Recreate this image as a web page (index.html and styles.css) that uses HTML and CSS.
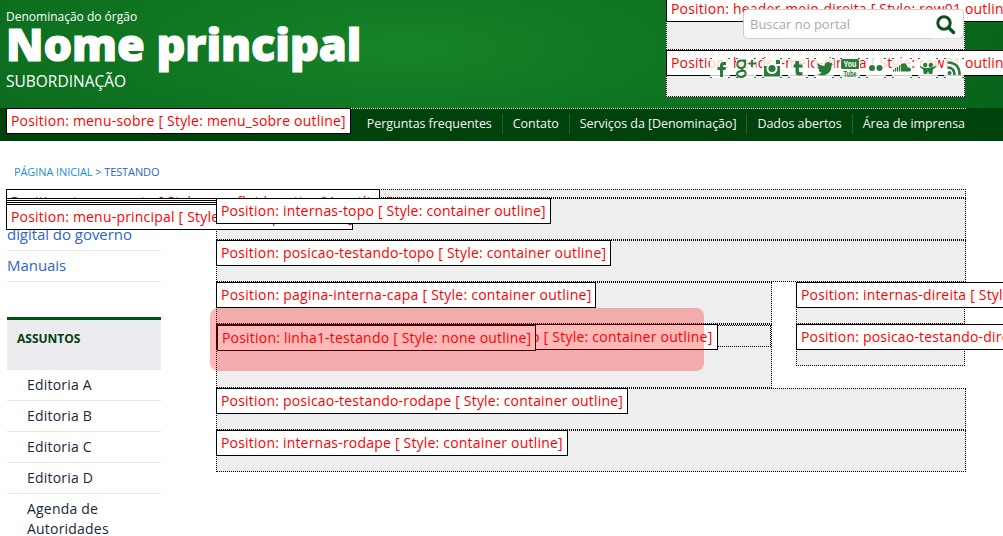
FILE: index.html
```html
<!DOCTYPE html>
<html lang="pt-br">
<head>
<meta charset="utf-8">
<title>Testando</title>
<link rel="stylesheet" href="styles.css">
</head>
<body>
<header class="header">
  <div class="brand">
    <span class="org">Denominação do órgão</span>
    <span class="name">Nome principal</span>
    <span class="sub">SUBORDINAÇÃO</span>
  </div>
  <div class="header-right">
    <div class="slot slot-search"><span class="label">Position: header-meio-direita [ Style: row01 outline]</span>
      <div class="search"><span class="placeholder">Buscar no portal</span>
        <span class="search-btn"><svg width="20" height="20" viewBox="0 0 20 20"><circle cx="8" cy="8" r="6.2" fill="none" stroke="#0d4f1d" stroke-width="3"/><path d="M12.500 12.500L17.500 17.500" stroke="#0d4f1d" stroke-width="3.400" stroke-linecap="round"/></svg></span>
      </div>
    </div>
    <div class="slot slot-social"><span class="label">Position: header-meio-direita [ Style: row01 outline]</span>
      <div class="social">
        <i><svg viewBox="0 0 20 20"><path d="M10 19v-7H7.500V9H10V7.500Q10 4 13.500 4H16v3h-2q-1 0-1 1v1h3l-.5 3H13v7z"/></svg></i>
        <i><svg viewBox="0 0 20 20"><path fill="none" stroke="#2a7a38" stroke-width="2" d="M10 2.500H5.500C0 2.500 0 10 5 10s6-7.500 1-7.500M5 10q0 1 2.500 2.500c4 2 2 6.500-2.500 6.500s-6-5 0-6h2M16 2v7M12.500 5.500H20"/></svg></i>
        <i><svg viewBox="0 0 20 20"><path d="M2 8h3.500a5 5 0 0 0 9 0H18v10.500H2zM14 2h4v4h-4z"/><circle cx="10" cy="10.500" r="5.500" fill="#fff"/><circle cx="10" cy="10.500" r="3.600"/></svg></i>
        <i><svg viewBox="0 0 20 20"><path d="M7.500 3H11v3.500h3.500v3H11V13q0 2 3.500 1v3q-7 2-7-3V9.500h-2V7q2-.5 2-4z"/></svg></i>
        <i><svg viewBox="0 0 20 20"><path d="M3.500 5q3 3 7 3c0-4 4-5 6-3l2-.7-1 2 1.500-.3-1.500 2c0 9-9 11-14 8q3 0 4-1.500-2.500-.3-3-2.500h1.500q-2.500-1-2.500-3.500L5 9Q2.500 7 3.500 5z"/></svg></i>
        <i><svg viewBox="0 0 20 20"><rect x="1" y="1" width="18" height="10" rx="1.500"/><text x="3.500" y="9.200" class="you" textLength="13" lengthAdjust="spacingAndGlyphs">You</text><text x="3.500" y="18.500" class="tube" textLength="13" lengthAdjust="spacingAndGlyphs">Tube</text></svg></i>
        <i><svg viewBox="0 0 20 20"><circle cx="6" cy="10" r="3"/><circle cx="13.500" cy="10" r="3"/></svg></i>
        <i><svg viewBox="0 0 20 20"><path d="M9 13V6.500q4-3 6 1 .5 1 .5 2Q19 9 19 11.500T17 13.500H9zM7 7h1.300v6.500H7zM5 9h1.300v4.500H5zM3 10h1.300v3.500H3zM1 11.500h1.300v2H1z"/></svg></i>
        <i><svg viewBox="0 0 20 20"><circle cx="7.200" cy="7" r="2.200"/><circle cx="12.800" cy="7" r="2.200"/><path d="M1.500 7.500q4.500 3 8.500 2.500t8.500-2.500q-1 3-3.500 3.700l-.7 4.800H11l-1-3-1 3H5.700L5 11.200Q2.500 10.500 1.500 7.500z"/></svg></i>
        <i><svg viewBox="0 0 20 20"><circle cx="5.500" cy="15" r="2"/><path fill="none" stroke="#2a7a38" stroke-width="2.600" d="M3.500 9.500q7 0 7 7.500M3.500 4.500Q16 5 15.500 17"/></svg></i>
      </div>
    </div>
  </div>
</header>
<nav class="topnav">
  <div class="topnav-inner"><span class="label">Position: menu-sobre [ Style: menu_sobre outline]</span>
    <ul><li>Perguntas frequentes</li><li>Contato</li><li>Serviços da [Denominação]</li><li>Dados abertos</li><li>Área de imprensa</li></ul>
  </div>
</nav>
<div class="crumbs"><span class="home">PÁGINA INICIAL</span> &gt; TESTANDO</div>
<main class="page">
  <div class="slot slot-thin"><span class="label wide">Position: topo-evento [ Style: row-fluid-section01 outline]</span></div>
  <div class="columns">
    <aside class="side">
      <div class="tick"><span class="label medium"></span></div>
      <div class="tick"><span class="label medium"></span></div>
      <div class="tick"><span class="label medium"></span></div>
      <div class="tick"><span class="label medium">Position: menu-principal [ Style: menu_pad outline]</span></div>
      <ul class="links"><li>digital do governo</li><li>Manuais</li></ul>
      <section class="menu"><h2>ASSUNTOS</h2>
        <ul><li>Editoria A</li><li>Editoria B</li><li>Editoria C</li><li>Editoria D</li><li>Agenda de Autoridades</li></ul>
      </section>
    </aside>
    <div class="content">
      <div class="slot"><span class="label">Position: internas-topo [ Style: container outline]</span></div>
      <div class="slot"><span class="label">Position: posicao-testando-topo [ Style: container outline]</span></div>
      <div class="split">
        <div class="main-col">
          <div class="slot"><span class="label loose">Position: pagina-interna-capa [ Style: container outline]</span></div>
          <div class="slot slot-tall"><span class="label loose">Position: posicao-pagina-interna-capa-testando [ Style: container outline]</span>
            <div class="slot slot-inner"><span class="label">Position: linha1-testando [ Style: none outline]</span></div>
            <div class="highlight"></div>
          </div>
        </div>
        <div class="right-col">
          <div class="slot"><span class="label">Position: internas-direita [ Style: container outline]</span></div>
          <div class="slot"><span class="label">Position: posicao-testando-direita [ Style: container outline]</span></div>
        </div>
      </div>
      <div class="slot"><span class="label">Position: posicao-testando-rodape [ Style: container outline]</span></div>
      <div class="slot"><span class="label">Position: internas-rodape [ Style: container outline]</span></div>
    </div>
  </div>
</main>
</body>
</html>
```
FILE: styles.css
```css
* { box-sizing: border-box; }
html, body { height: 536px; overflow: hidden; }
body { margin: 0; font: 14px/20px "Open Sans", sans-serif; background: #fff; color: #172938; }
ul { list-style: none; margin: 0; padding: 0; }

.header { height: 108px; display: flex; padding-left: 6px; color: #fff;
  background: radial-gradient(ellipse 620px 170px at 405px 48px, #16832a 0%, #0f7521 45%, #08641a 100%); }
.brand { width: 660px; padding-top: 9px; display: flex; flex-direction: column; white-space: nowrap; }
.org { font-size: 12px; line-height: 16px; }
.name { font-size: 45px; line-height: 45px; font-weight: 800; letter-spacing: -.05px; margin-top: -4px; -webkit-text-stroke: 1.2px #fff; }
.sub { font-size: 15.500px; line-height: 20px; margin-top: 5px; }

.slot { position: relative; height: 42px; border: 1px dotted #000; background: #eee; }
.label { position: absolute; top: -1px; left: -1px; height: 26px; padding: 2px 4px; border: 1px solid #000; background: #fff; color: #f00; letter-spacing: .2px; white-space: nowrap; }
.loose { letter-spacing: .24px; }

.header-right { width: 299px; }
.slot-search { height: 54px; margin-top: -4px; padding: 12px 0 0 76px; }
.slot-social { height: 47px; padding: 7px 0 0 43px; }
.search { position: relative; display: flex; height: 30px; background: #fff; border: 1px solid #ccc; border-radius: 5px; }
.placeholder { flex: 1; padding: 4px 6px; font-size: 13px; color: #aaa; }
.search-btn { width: 33px; padding: 5px 6px; box-shadow: 0 1px 0 #dde; }
.search-btn svg { display: block; }
.social { position: relative; display: flex; gap: 6px; }
.social i { width: 20px; height: 20px; flex: none;
  background:
    linear-gradient(#2a7a38, #2a7a38) 0 0 / 2px 1px no-repeat,
    linear-gradient(#2a7a38, #2a7a38) 18px 0 / 2px 1px no-repeat,
    linear-gradient(#2a7a38, #2a7a38) 0 19px / 2px 1px no-repeat,
    linear-gradient(#2a7a38, #2a7a38) 18px 19px / 2px 1px no-repeat,
    rgba(255, 255, 255, .8); }
.social svg { display: block; width: 20px; height: 20px; fill: #2a7a38; }
.you, .tube { font: bold 9px "Liberation Sans", sans-serif; }
.you { fill: #fff; }

.topnav { height: 33px; background: #00420c; padding-left: 6px; }
.topnav-inner { position: relative; width: 960px; height: 33px; border-top: 1px dotted #fff; }
.topnav .label { left: 0; }
.topnav ul { display: flex; justify-content: flex-end; padding: 5px 1px 0 0; color: #f3f7f3; font-size: 12.500px; letter-spacing: -.06px; white-space: nowrap; }
.topnav li { padding-left: 10px; margin-left: 10px; border-left: 1px solid #2d5c33; }
.topnav li:first-child { border-left: 0; }

.crumbs { height: 48px; padding: 21px 0 0 14px; font-size: 11px; letter-spacing: -.1px; color: #2c66ce; }
.home { color: #1590cc; }
.page { width: 960px; margin-left: 6px; }
.slot-thin { height: 9px; }
.columns { display: flex; }
.side { width: 154px; margin: 0 55px 0 1px; font-size: 15px; }
.tick { position: relative; height: 2px; font-size: 14px; }
.tick .label { top: 0; z-index: 1; }
.wide { width: 374px; }
.medium { width: 347px; }
.links { padding-top: 13px; color: #2c66ce; letter-spacing: -.05px; }
.links li { padding: 4px 0 6px; border-bottom: 1px solid #e6e6e6; }
.links li:first-child { padding-top: 5px; }
.menu { margin-top: 35px; border-top: 3px solid #00500f; }
.menu h2 { height: 50px; margin: 0; padding: 9px 10px; background: #ebebf0; color: #00420c; font-size: 12px; line-height: 20px; font-weight: 700; }
.menu li { padding: 5px 0 5px 20px; border-bottom: 1px solid #e6e6e6; font-size: 14px; letter-spacing: .2px; }
.content { width: 750px; }
.content .label { z-index: 2; }
.split { display: flex; justify-content: space-between; }
.main-col { width: 556px; }
.right-col { width: 169px; margin-right: 1px; }
.slot-tall { height: 64px; }
.slot-inner { height: 22px; }
.highlight { position: absolute; z-index: 3; left: -7px; top: -17px; width: 494px; height: 63px; border-radius: 8px; background: rgba(255, 0, 0, .275); }
```
